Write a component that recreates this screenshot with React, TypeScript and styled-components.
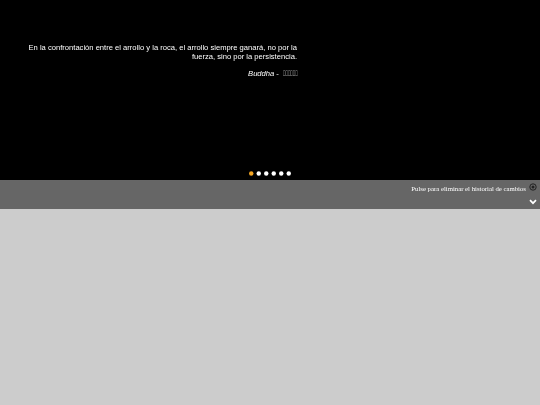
import styled, { createGlobalStyle } from "styled-components";

const GlobalStyle = createGlobalStyle`
  html, body {
    margin: 0;
    padding: 0;
    height: 100%;
    background: #cccccc;
  }
`;

const Stage = styled.div`
  position: relative;
  height: 180px;
  background: #000;
  padding: 43px 243px 0 28px;
  box-sizing: border-box;
`;

const Quote = styled.div`
  font-family: "Liberation Sans", Arial, sans-serif;
  font-size: 7.6px;
  line-height: 9px;
  color: #fff;
  text-align: right;
  filter: blur(0.2px);
`;

const Author = styled.div`
  margin-top: 8px;
  line-height: 10px;

  em {
    font-style: italic;
  }
`;

const Native = styled.span`
  display: inline-block;
  width: 14px;
  margin-left: 2px;
  white-space: nowrap;
  text-align: left;
  vertical-align: baseline;
  transform: scaleX(0.43);
  transform-origin: left center;
`;

const Dots = styled.div`
  position: absolute;
  left: 0;
  right: 0;
  bottom: 4px;
  display: flex;
  justify-content: center;
  line-height: 0;
`;

const HistoryBar = styled.div`
  height: 29px;
  background: #666;
  display: flex;
  flex-direction: column;
  align-items: flex-end;
  padding: 3px 3px 0 0;
  box-sizing: border-box;
`;

const ClearRow = styled.div`
  display: flex;
  align-items: center;
  gap: 3px;
  height: 10px;
  font-family: "Liberation Serif", "Times New Roman", serif;
  font-size: 6.75px;
  color: #fff;

  svg {
    margin-top: -2px;
  }
`;

const ClearLabel = styled.span`
  filter: blur(0.2px);
`;

const Toggle = styled.div`
  margin-top: 6px;
  display: flex;
  line-height: 0;
`;

const quotes = [true, false, false, false, false, false];

export default function App() {
  return (
    <>
      <GlobalStyle />
      <Stage>
        <Quote>
          En la confrontación entre el arrollo y la roca, el arrollo siempre ganará, no por la fuerza, sino por la
          persistencia.
          <Author>
            <em>Buddha</em> - <Native>{"\uE000\uE001\uE002\uE003\uE004\uE005"}</Native>
          </Author>
        </Quote>
        <Dots>
          <svg width="46" height="5" viewBox="0 0 46 5">
            {quotes.map((active, i) => (
              <circle key={i} cx={4.25 + i * 7.5} cy="2.5" r="2.2" fill={active ? "#f5a623" : "#fff"} />
            ))}
          </svg>
        </Dots>
      </Stage>
      <HistoryBar>
        <ClearRow>
          <ClearLabel>Pulse para eliminar el historial de cambios</ClearLabel>
          <svg width="8" height="8" viewBox="0 0 8 8">
            <circle cx="4" cy="4" r="3.2" fill="none" stroke="#222" strokeWidth="1" />
            <circle cx="4" cy="4" r="1.5" fill="#222" />
          </svg>
        </ClearRow>
        <Toggle>
          <svg width="8" height="6" viewBox="0 0 8 6">
            <path d="M1 1.2 L4 4.2 L7 1.2" fill="none" stroke="#fff" strokeWidth="1.7" />
          </svg>
        </Toggle>
      </HistoryBar>
    </>
  );
}
